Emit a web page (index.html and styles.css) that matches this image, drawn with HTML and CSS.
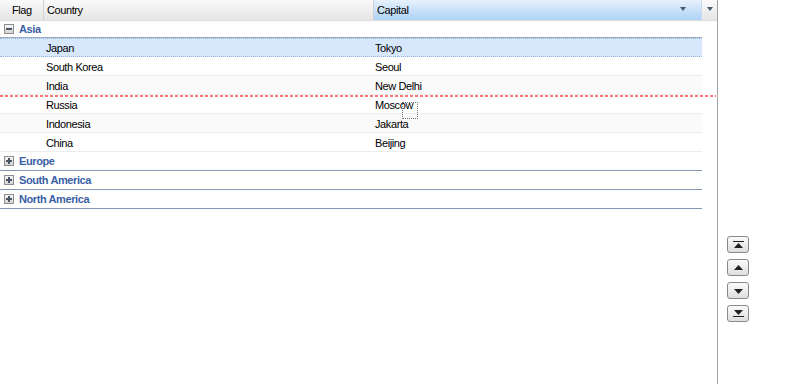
FILE: index.html
```html
<!DOCTYPE html>
<html lang="en">
<head>
  <meta charset="UTF-8">
  <title>Grid</title>
  <link rel="stylesheet" href="styles.css">
</head>
<body>
  <div class="page">
    <div class="grid">
      <div class="grid-header">
        <div class="hd hd-flag">Flag</div>
        <div class="hd hd-country">Country</div>
        <div class="hd hd-capital">Capital<span class="hd-arrow"></span></div>
        <div class="hd hd-trigger"><span class="hd-arrow"></span></div>
      </div>
      <div class="grid-body">
        <div class="group open">
          <span class="toggle minus"></span>Asia
        </div>
        <div class="row selected"><div class="c-flag"></div><div class="c-country">Japan</div><div class="c-capital">Tokyo</div></div>
        <div class="row"><div class="c-flag"></div><div class="c-country">South Korea</div><div class="c-capital">Seoul</div></div>
        <div class="row alt"><div class="c-flag"></div><div class="c-country">India</div><div class="c-capital">New Delhi</div></div>
        <div class="row"><div class="c-flag"></div><div class="c-country">Russia</div><div class="c-capital">Moscow</div></div>
        <div class="row alt"><div class="c-flag"></div><div class="c-country">Indonesia</div><div class="c-capital">Jakarta</div></div>
        <div class="row"><div class="c-flag"></div><div class="c-country">China</div><div class="c-capital">Beijing</div></div>
        <div class="group closed"><span class="toggle plus"></span>Europe</div>
        <div class="group closed"><span class="toggle plus"></span>South America</div>
        <div class="group closed"><span class="toggle plus"></span>North America</div>

        <div class="drop-line"></div>
        <div class="drag-proxy"></div>
      </div>
    </div>

    <div class="mover">
      <button class="mv-btn" title="Top">
        <svg width="11" height="8" viewBox="0 0 11 8"><rect x="0" y="0" width="11" height="1" fill="#222"/><polygon points="5.5,2 10,7 1,7" fill="#222"/></svg>
      </button>
      <button class="mv-btn" title="Up">
        <svg width="11" height="8" viewBox="0 0 11 8"><polygon points="5.5,1 10,6 1,6" fill="#222"/></svg>
      </button>
      <button class="mv-btn" title="Down">
        <svg width="11" height="8" viewBox="0 0 11 8"><polygon points="1,2 10,2 5.5,7" fill="#222"/></svg>
      </button>
      <button class="mv-btn" title="Bottom">
        <svg width="11" height="8" viewBox="0 0 11 8"><polygon points="1,0 10,0 5.5,5" fill="#222"/><rect x="0" y="6" width="11" height="1" fill="#222"/></svg>
      </button>
    </div>
  </div>
</body>
</html>
```

FILE: styles.css
```css
* {
  box-sizing: border-box;
}
body {
  margin: 0;
  background: #fff;
  font-family: "Liberation Sans", Arial, sans-serif;
  font-size: 11px;
  letter-spacing: -0.4px;
  color: #000;
}
.page {
  display: flex;
  height: 384px;
}
.grid {
  width: 718px;
  border-right: 1px solid #a5a5a5;
  height: 100%;
}
.grid-header {
  display: flex;
  height: 20px;
  background: linear-gradient(#fafafa, #e5e5e5);
  box-shadow: 0 1px 1px rgba(0,0,0,0.12);
  position: relative;
  z-index: 1;
}
.hd {
  height: 20px;
  line-height: 21px;
  padding-left: 3px;
  border-right: 1px solid #d0d0d0;
  position: relative;
}
.hd-flag {
  width: 44px;
  padding-left: 12px;
}
.hd-country {
  width: 330px;
}
.hd-capital {
  width: 328px;
  background: linear-gradient(#e7f1fc, #add2f6);
  border-right: 1px solid #c4ddf5;
}
.hd-trigger {
  width: 15px;
  border-right: none;
}
.hd-arrow {
  position: absolute;
  top: 7px;
  width: 0;
  height: 0;
  border-left: 3px solid transparent;
  border-right: 3px solid transparent;
  border-top: 4px solid #4a5b70;
}
.hd-capital .hd-arrow {
  right: 15px;
}
.hd-trigger .hd-arrow {
  left: 5px;
}
.grid-body {
  width: 702px;
  position: relative;
}
.group {
  height: 19px;
  display: flex;
  align-items: center;
  padding-left: 4px;
  font-weight: bold;
  color: #3b5fa5;
  border-bottom: 1px solid #8397b5;
}
.group.open {
  height: 18px;
  border-bottom-color: #99aac2;
}
.toggle {
  width: 10px;
  height: 10px;
  margin-right: 5px;
  border: 1px solid #8e8e8e;
  background: linear-gradient(#f6f6f6, #d6d6d6);
  position: relative;
}
.toggle::before,
.toggle::after {
  content: "";
  position: absolute;
  background: #4a5668;
}
.toggle::before {
  left: 1px;
  top: 3px;
  width: 6px;
  height: 2px;
}
.plus::after {
  left: 3px;
  top: 1px;
  width: 2px;
  height: 6px;
}
.row {
  display: flex;
  height: 19px;
  line-height: 20px;
  border-bottom: 1px solid #ededed;
}
.row.alt {
  background: #fafafa;
}
.row.selected {
  background: #d8e8fc;
  border-top: 1px dotted #98b4d8;
  border-bottom: 1px dotted #98b4d8;
  line-height: 18px;
}
.c-flag {
  width: 44px;
}
.c-country {
  width: 330px;
  padding-left: 2px;
}
.c-capital {
  width: 328px;
  padding-left: 1px;
}
.drop-line {
  position: absolute;
  left: 0;
  top: 75px;
  width: 716px;
  height: 2px;
  background: repeating-linear-gradient(90deg, #f77 0 3px, transparent 3px 5px);
}
.drag-proxy {
  position: absolute;
  left: 402px;
  top: 82px;
  width: 16px;
  height: 17px;
  border: 1px dotted #777;
}
.mover {
  display: flex;
  flex-direction: column;
  gap: 6px;
  padding: 236px 0 0 9px;
}
.mv-btn {
  width: 22px;
  height: 17px;
  padding: 0;
  border: 1px solid #8a8a8a;
  border-radius: 3px;
  background: linear-gradient(#fbfbfb, #dedede);
  display: flex;
  align-items: center;
  justify-content: center;
  cursor: pointer;
}
```
